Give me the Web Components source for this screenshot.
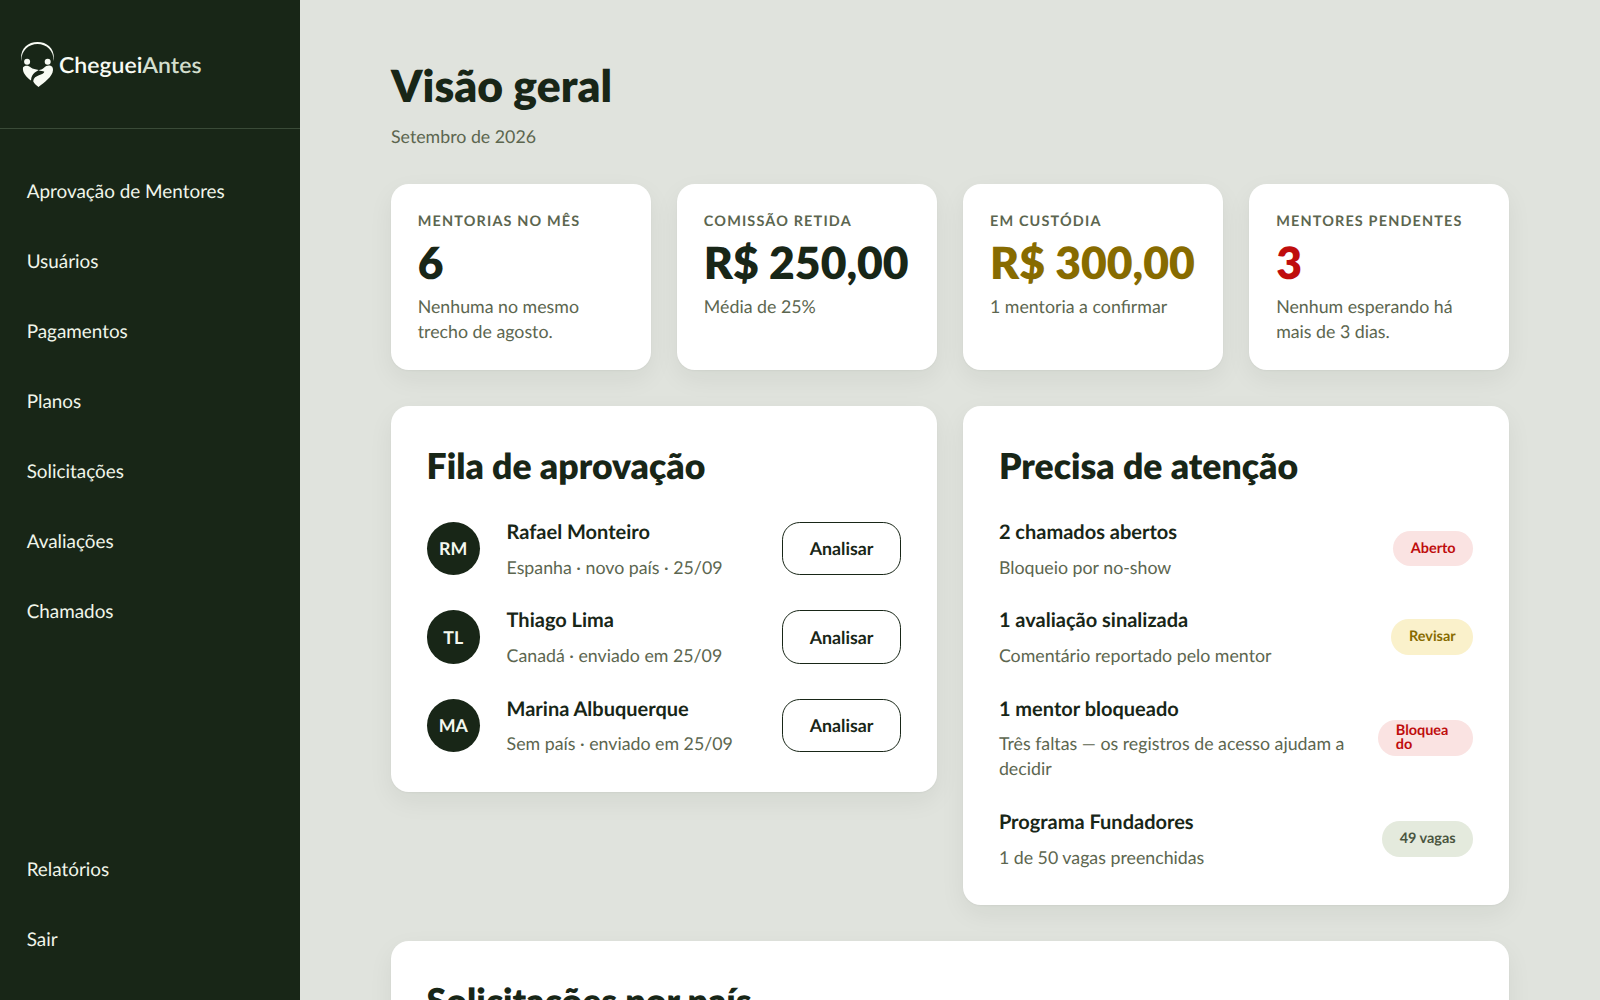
<!DOCTYPE html>
<html lang="pt-BR">
<head>
<meta charset="utf-8">
<title>ChegueiAntes - Visão geral</title>
<style>
    :root {
        --green: #182617;
        --muted: #5c664f;
        --gold: #876b00;
        --red: #bf0d0d;
        font-size: 17.7778px;
    }

    body {
        margin: 0;
        height: 100vh;
        overflow: hidden;
        background: #e0e3dd;
        color: var(--green);
        font-family: Lato, "Open Sans", sans-serif;
        line-height: 1.4;
        text-rendering: geometricPrecision;
    }
</style>
</head>
<body>
<admin-layout>
    <side-bar slot="side">
        <brand-logo slot="logo"></brand-logo>
        <nav-link>Aprovação de Mentores</nav-link>
        <nav-link>Usuários</nav-link>
        <nav-link>Pagamentos</nav-link>
        <nav-link>Planos</nav-link>
        <nav-link>Solicitações</nav-link>
        <nav-link>Avaliações</nav-link>
        <nav-link>Chamados</nav-link>
        <nav-link slot="bottom">Relatórios</nav-link>
        <nav-link slot="bottom">Sair</nav-link>
    </side-bar>

    <page-header>Visão geral<span slot="sub">Setembro de 2026</span></page-header>

    <card-grid cols="4">
        <stat-card label="Mentorias no mês" value="6">Nenhuma no mesmo trecho de agosto.</stat-card>
        <stat-card label="Comissão retida" value="R$ 250,00">Média de 25%</stat-card>
        <stat-card label="Em custódia" value="R$ 300,00" tone="gold">1 mentoria a confirmar</stat-card>
        <stat-card label="Mentores pendentes" value="3" tone="red">Nenhum esperando há mais de 3 dias.</stat-card>
    </card-grid>

    <card-grid cols="2">
        <panel-card heading="Fila de aprovação">
            <list-row name="Rafael Monteiro">
                <user-avatar slot="start">RM</user-avatar>
                Espanha · novo país · 25/09
                <outline-button slot="end">Analisar</outline-button>
            </list-row>
            <list-row name="Thiago Lima">
                <user-avatar slot="start">TL</user-avatar>
                Canadá · enviado em 25/09
                <outline-button slot="end">Analisar</outline-button>
            </list-row>
            <list-row name="Marina Albuquerque">
                <user-avatar slot="start">MA</user-avatar>
                Sem país · enviado em 25/09
                <outline-button slot="end">Analisar</outline-button>
            </list-row>
        </panel-card>
        <panel-card heading="Precisa de atenção">
            <list-row name="2 chamados abertos">
                Bloqueio por no-show
                <status-pill slot="end" tone="red">Aberto</status-pill>
            </list-row>
            <list-row name="1 avaliação sinalizada">
                Comentário reportado pelo mentor
                <status-pill slot="end" tone="gold">Revisar</status-pill>
            </list-row>
            <list-row name="1 mentor bloqueado">
                Três faltas — os registros de acesso ajudam a decidir
                <status-pill slot="end" tone="red" narrow>Bloqueado</status-pill>
            </list-row>
            <list-row name="Programa Fundadores">
                1 de 50 vagas preenchidas
                <status-pill slot="end">49 vagas</status-pill>
            </list-row>
        </panel-card>
    </card-grid>

    <panel-card heading="Solicitações por país"></panel-card>
</admin-layout>

<script>
class BaseElement extends HTMLElement {

    constructor() {
        super();
        this.shadow = this.attachShadow({mode: 'open'});
    }

    connectedCallback() {
        this.shadow.innerHTML = this.template();
    }
}

class AdminLayout extends BaseElement {
    template() {
        return `
        <style>
            :host {
                display: flex;
                height: 100vh;
            }

            main {
                flex: 1;
                min-width: 0;
                box-sizing: border-box;
                display: flex;
                flex-direction: column;
                gap: 2rem;
                padding: 3rem 5.12rem 0;
                overflow: hidden;
            }
        </style>
        <slot name="side"></slot>
        <main><slot></slot></main>
        `;
    }
}

class SideBar extends BaseElement {
    template() {
        return `
        <style>
            :host {
                flex: none;
                width: 300px;
                display: flex;
                flex-direction: column;
                background: var(--green);
                color: #f0f5ea;
            }

            header {
                height: 128px;
                border-bottom: 1px solid #3a4b38;
            }

            nav {
                flex: 1;
                display: flex;
                flex-direction: column;
                padding: 1.5rem;
            }

            .bottom {
                margin-top: auto;
            }
        </style>
        <header><slot name="logo"></slot></header>
        <nav>
            <slot></slot>
            <div class="bottom"><slot name="bottom"></slot></div>
        </nav>
        `;
    }
}

class BrandLogo extends BaseElement {
    template() {
        return `
        <style>
            :host {
                display: block;
                padding: 40px 0 0 20px;
            }

            svg {
                display: block;
            }

            text {
                font-family: Lato, sans-serif;
                font-size: 22px;
                font-weight: 600;
            }
        </style>
        <svg width="190" height="50" viewBox="0 0 190 50" fill="#f8fbf4">
            <path d="M1.300 21.500C-0.500 9.500 7 2 17.500 2S35.500 9.500 33.700 21.500C34 10.500 26.500 3.900 17.500 3.900S1 10.500 1.300 21.500Z"/>
            <circle cx="7.100" cy="21.700" r="3"/>
            <circle cx="27.700" cy="21.700" r="3"/>
            <path d="M3 27.500C4.500 25.200 8.500 25.200 10.800 27.500C12.800 29.300 15.500 29.200 18.700 30L14.800 32.600C12.600 34.200 11.200 36.800 11 40.500C6.300 37 2.200 32.500 3 27.500Z"/>
            <path d="M32.200 26.800C30 24.700 26.500 25 24 27.800C22.300 29.600 20.500 29.700 18.700 30.200C20.500 31.300 23 30.500 24.300 31.800C24.300 35.200 13.800 34.500 13.200 41.200C14.200 43.600 16.500 45.300 18.500 47C24 42.800 32.800 36.500 33 30C33 28.800 32.800 27.800 32.200 26.800Z"/>
            <text x="39" y="33.200" textLength="142.500" lengthAdjust="spacingAndGlyphs">Cheguei<tspan fill="#d3decd">Antes</tspan></text>
        </svg>
        `;
    }
}

class NavLink extends BaseElement {
    template() {
        return `
        <style>
            :host {
                box-sizing: border-box;
                display: flex;
                align-items: center;
                height: 70px;
                padding-top: 3px;
                font-size: 1.0625rem;
            }
        </style>
        <slot></slot>
        `;
    }
}

class PageHeader extends BaseElement {
    template() {
        return `
        <style>
            :host {
                display: block;
                padding-top: 1.5px;
            }

            h1 {
                margin: 0 0 calc(0.5rem - 2.2px);
                font-size: 2.5rem;
                font-weight: 800;
            }

            div {
                color: var(--muted);
            }
        </style>
        <h1><slot></slot></h1>
        <div><slot name="sub"></slot></div>
        `;
    }
}

class CardGrid extends BaseElement {
    template() {
        return `
        <style>
            :host {
                display: grid;
                grid-template-columns: repeat(${this.getAttribute('cols')}, minmax(0, 1fr));
                gap: 1.5rem;
            }

            :host([cols="2"]) {
                align-items: start;
            }
        </style>
        <slot></slot>
        `;
    }
}

class StatCard extends BaseElement {
    template() {
        return `
        <style>
            :host {
                display: block;
                padding: calc(1.5rem + 1px) 1.5rem 1.5rem;
                border-radius: 1rem;
                background: #fff;
                box-shadow: 0 1px 2px rgba(24, 38, 23, 0.04), 0 9px 26px rgba(24, 38, 23, 0.06);
            }

            .label {
                font-size: 0.8125rem;
                font-weight: 700;
                letter-spacing: 0.08em;
                text-transform: uppercase;
                color: var(--muted);
            }

            .value {
                margin-bottom: -0.5px;
                font-size: 2.5rem;
                font-weight: 800;
                white-space: nowrap;
            }

            :host([tone="gold"]) .value {
                color: var(--gold);
            }

            :host([tone="red"]) .value {
                color: var(--red);
            }

            .note {
                color: var(--muted);
            }
        </style>
        <div class="label">${this.getAttribute('label')}</div>
        <div class="value">${this.getAttribute('value')}</div>
        <div class="note"><slot></slot></div>
        `;
    }
}

class PanelCard extends BaseElement {
    template() {
        return `
        <style>
            :host {
                display: flex;
                flex-direction: column;
                gap: 1.5rem;
                padding: 2rem;
                border-radius: 1rem;
                background: #fff;
                box-shadow: 0 1px 2px rgba(24, 38, 23, 0.04), 0 9px 26px rgba(24, 38, 23, 0.06);
            }

            h2 {
                margin: 0;
                font-size: 2rem;
                font-weight: 800;
            }
        </style>
        <h2>${this.getAttribute('heading')}</h2>
        <slot></slot>
        `;
    }
}

class ListRow extends BaseElement {
    template() {
        return `
        <style>
            :host {
                display: flex;
                align-items: center;
                gap: 1.5rem;
            }

            .text {
                flex: 1;
                min-width: 0;
            }

            .name {
                margin-bottom: 0.5rem;
                font-size: 1.125rem;
                font-weight: 700;
            }

            .detail {
                color: var(--muted);
            }
        </style>
        <slot name="start"></slot>
        <div class="text">
            <div class="name">${this.getAttribute('name')}</div>
            <div class="detail"><slot></slot></div>
        </div>
        <slot name="end"></slot>
        `;
    }
}

class UserAvatar extends BaseElement {
    template() {
        return `
        <style>
            :host {
                flex: none;
                display: flex;
                align-items: center;
                justify-content: center;
                width: 3rem;
                height: 3rem;
                border-radius: 50%;
                background: var(--green);
                color: #f4f8ef;
                font-weight: 700;
            }
        </style>
        <slot></slot>
        `;
    }
}

class OutlineButton extends BaseElement {
    template() {
        return `
        <style>
            :host {
                flex: none;
                display: block;
            }

            button {
                display: block;
                height: 3rem;
                padding: 0 1.5rem;
                border: 1px solid var(--green);
                border-radius: 1rem;
                background: transparent;
                color: inherit;
                font: inherit;
                font-weight: 700;
                text-rendering: inherit;
                cursor: pointer;
            }
        </style>
        <button><slot></slot></button>
        `;
    }
}

class StatusPill extends BaseElement {
    template() {
        return `
        <style>
            :host {
                flex: none;
                box-sizing: border-box;
                display: flex;
                align-items: center;
                height: 2rem;
                padding: 1px 1rem 0;
                border-radius: 1rem;
                background: #e4eadd;
                color: #4a553f;
                font-size: 0.8125rem;
                font-weight: 700;
                line-height: 1;
            }

            :host([tone="red"]) {
                background: #fae3e2;
                color: var(--red);
            }

            :host([tone="gold"]) {
                background: #faf1cb;
                color: var(--gold);
            }

            :host([narrow]) {
                width: 5.37rem;
                overflow-wrap: anywhere;
            }
        </style>
        <slot></slot>
        `;
    }
}

customElements.define('admin-layout', AdminLayout);
customElements.define('side-bar', SideBar);
customElements.define('brand-logo', BrandLogo);
customElements.define('nav-link', NavLink);
customElements.define('page-header', PageHeader);
customElements.define('card-grid', CardGrid);
customElements.define('stat-card', StatCard);
customElements.define('panel-card', PanelCard);
customElements.define('list-row', ListRow);
customElements.define('user-avatar', UserAvatar);
customElements.define('outline-button', OutlineButton);
customElements.define('status-pill', StatusPill);
</script>
</body>
</html>
